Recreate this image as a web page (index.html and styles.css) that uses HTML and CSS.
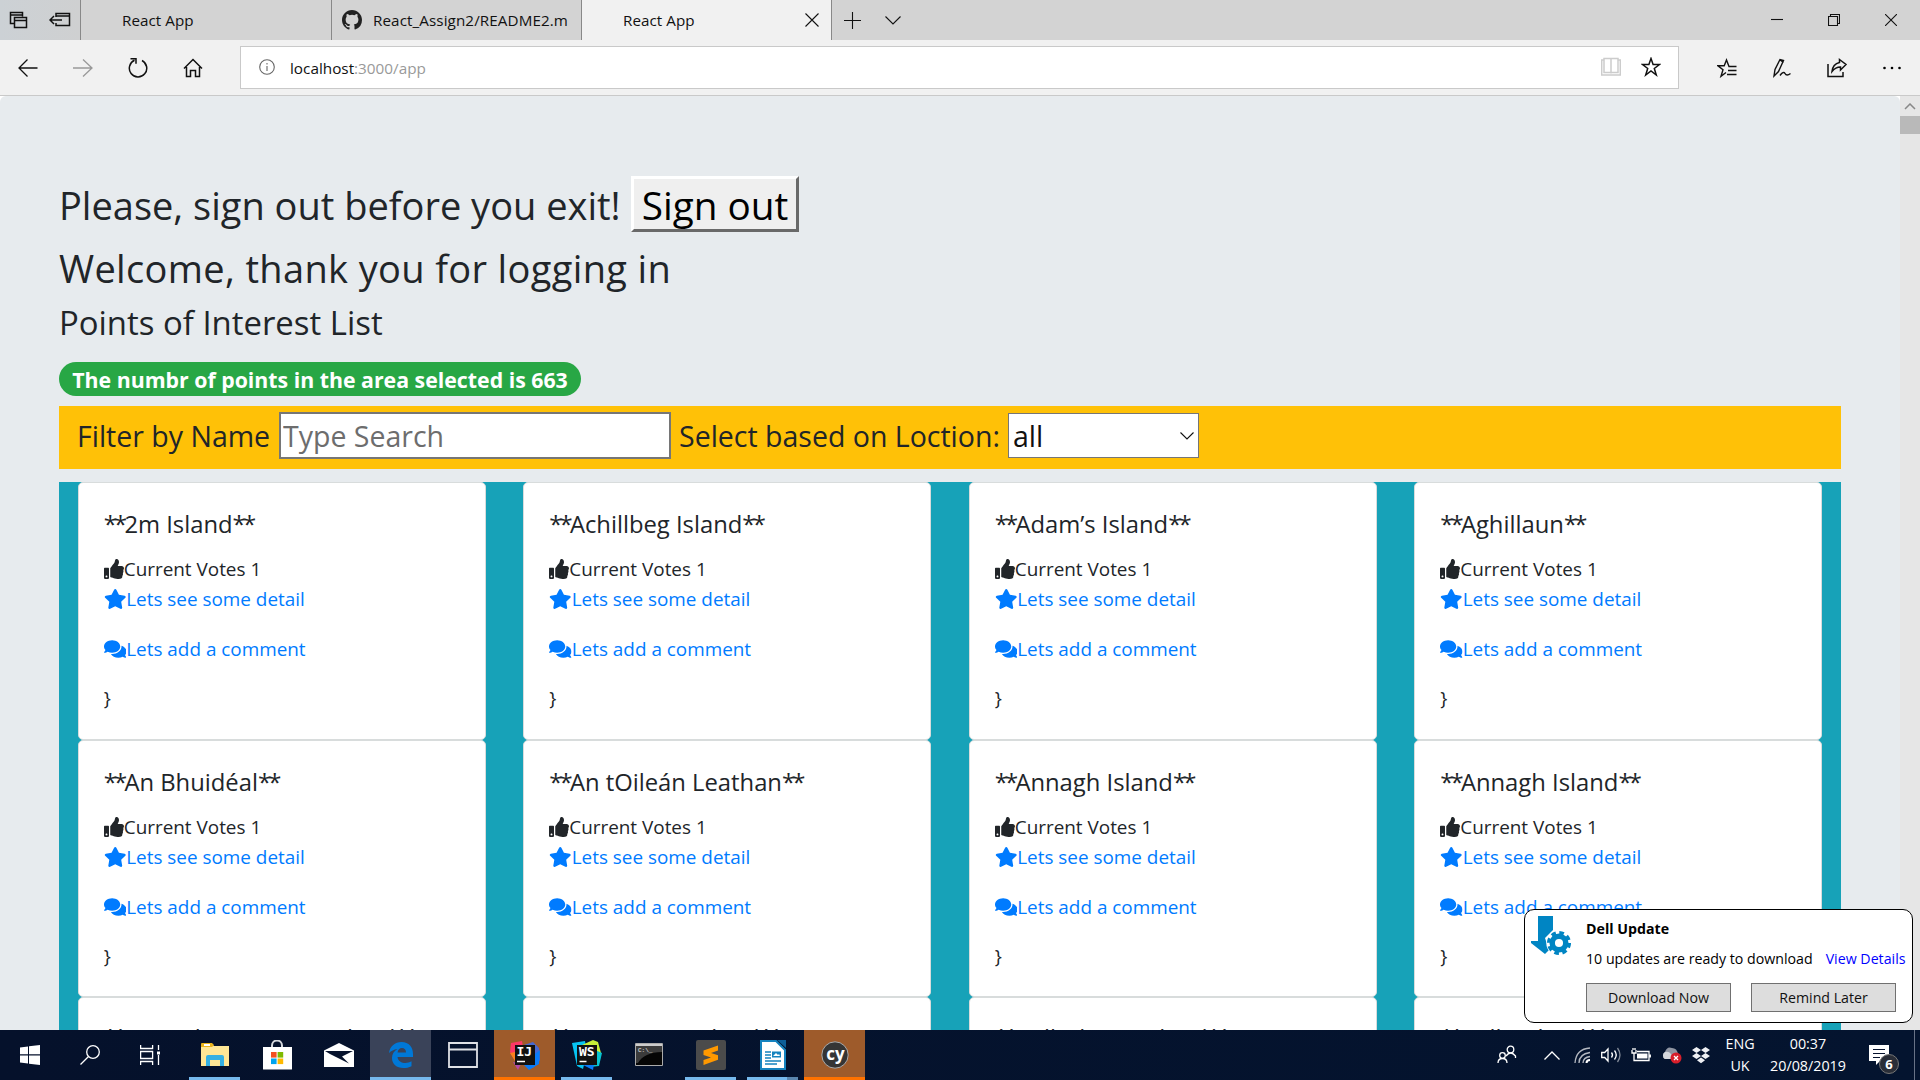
FILE: index.html
```html
<!DOCTYPE html>
<html lang="en">
<head>
<meta charset="utf-8">
<title>React App</title>
<link rel="stylesheet" href="styles.css">
</head>
<body>
<svg class="defs" aria-hidden="true">
  <symbol id="thumb" viewBox="0 0 512 512"><path d="M104 224H24c-13 0-24 11-24 24v240c0 13 11 24 24 24h80c13 0 24-11 24-24V248c0-13-11-24-24-24zM64 472c-13 0-24-11-24-24s11-24 24-24 24 11 24 24-11 24-24 24zM384 81.500c0 42.400-26 66.200-33.300 94.500h101.700c33.400 0 59.400 27.700 59.600 58.100.1 17.900-7.500 37.200-19.400 49.200l-.1.100c9.800 23.300 8.200 56-9.300 79.500 8.700 25.900-.1 57.700-16.400 74.800 4.300 17.600 2.200 32.600-6.100 44.600C440.200 511.600 389.600 512 346.800 512H344c-48.300 0-87.800-17.600-119.600-31.700-16-7.100-36.800-15.900-52.700-16.200-6.500-.1-11.800-5.500-11.800-12V238.300c0-3.200 1.300-6.300 3.600-8.500 39.600-39.100 56.600-80.600 89.100-113.100 14.800-14.800 20.200-37.200 25.400-58.900C282.500 39.300 291.800 0 312 0c24 0 72 8 72 81.500z"/></symbol>
  <symbol id="star" viewBox="0 0 576 512"><path d="M259.300 17.800L194 150.200 47.900 171.500c-26.200 3.800-36.700 36.100-17.700 54.600l105.700 103-25 145.500c-4.500 26.300 23.200 46 46.400 33.700L288 439.600l130.700 68.700c23.200 12.200 50.900-7.400 46.400-33.700l-25-145.500 105.700-103c19-18.500 8.500-50.800-17.700-54.600L382 150.200 316.700 17.800c-11.700-23.600-45.600-23.900-57.400 0z"/></symbol>
  <symbol id="comments" viewBox="0 0 576 512"><path d="M416 192c0-88.400-93.100-160-208-160S0 103.600 0 192c0 34.300 14.100 65.900 38 92-13.400 30.200-35.500 54.200-35.800 54.500-2.200 2.300-2.800 5.700-1.500 8.700S4.800 352 8 352c36.600 0 66.900-12.300 88.700-25 32.200 15.700 70.300 25 111.300 25 114.900 0 208-71.600 208-160zm122 220c23.900-26 38-57.700 38-92 0-66.900-53.500-124.200-129.300-148.100.9 6.600 1.300 13.300 1.300 20.100 0 105.900-107.700 192-240 192-10.800 0-21.300-.8-31.700-1.900C207.800 439.600 281.800 480 368 480c41 0 79.100-9.200 111.300-25 21.800 12.700 52.100 25 88.700 25 3.200 0 6.100-1.900 7.300-4.800 1.300-2.900.7-6.300-1.500-8.700-.3-.3-22.400-24.200-35.800-54.500z"/></symbol>
</svg>

<header class="tabbar">
  <div class="tab-tools">
    <svg width="20" height="20" viewBox="0 0 20 20" class="line"><path d="M5.500 13.500h-4v-11h12v4M1.500 5h12M5.500 7.500h12v10h-12zM5.500 10.500h12" stroke-width="1.500"/></svg>
    <svg width="22" height="20" viewBox="0 0 22 20" class="line"><path d="M7 7V3.500h13.500v12H7V13M7 6h13M1 10h12M5 6l-4 4 4 4" stroke-width="1.500"/></svg>
  </div>
  <div class="tab"><span>React App</span></div>
  <div class="tab github">
    <svg width="20" height="20" viewBox="0 0 16 16" fill="#222"><path d="M8 0C3.580 0 0 3.580 0 8c0 3.540 2.290 6.530 5.470 7.590.4.070.55-.17.55-.38 0-.19-.01-.82-.01-1.490-2.010.37-2.530-.49-2.690-.94-.09-.23-.48-.94-.82-1.130-.28-.15-.68-.52-.01-.53.63-.01 1.080.58 1.230.82.72 1.210 1.870.87 2.330.66.070-.52.28-.87.51-1.070-1.780-.2-3.640-.89-3.640-3.950 0-.87.31-1.590.82-2.150-.08-.2-.36-1.020.08-2.120 0 0 .67-.21 2.200.82a7.600 7.600 0 014 0c1.530-1.040 2.200-.82 2.200-.82.44 1.100.16 1.920.08 2.120.51.56.82 1.270.82 2.150 0 3.070-1.870 3.750-3.650 3.950.29.25.54.73.54 1.480 0 1.070-.01 1.930-.01 2.200 0 .21.15.46.55.38A8 8 0 0016 8c0-4.420-3.580-8-8-8z"/></svg>
    <span>React_Assign2/README2.m</span>
  </div>
  <div class="tab active"><span>React App</span>
    <svg width="14" height="14" viewBox="0 0 14 14" class="line"><path d="M.5.500l13 13M13.500.500l-13 13"/></svg>
  </div>
  <svg class="line plus" width="17" height="17" viewBox="0 0 17 17"><path d="M8.500 0v17M0 8.500h17"/></svg>
  <svg class="line down" width="16" height="9" viewBox="0 0 16 9"><path d="M.5.500L8 8l7.500-7.500"/></svg>
  <div class="window-buttons">
    <svg width="12" height="12" viewBox="0 0 12 12" class="line"><path d="M0 5.500h12"/></svg>
    <svg width="12" height="12" viewBox="0 0 12 12" class="line"><path d="M.5 2.500h9v9h-9zM2.500 2.500v-2h9v9h-2"/></svg>
    <svg width="12" height="12" viewBox="0 0 12 12" class="line"><path d="M0 0l12 12M12 0L0 12"/></svg>
  </div>
</header>

<nav class="toolbar">
  <div class="nav-icons">
    <svg width="20" height="18" viewBox="0 0 20 18" class="line"><path d="M19.500 9H1M9.500.500L1 9l8.500 8.500" stroke-width="1.300"/></svg>
    <svg width="20" height="18" viewBox="0 0 20 18" class="line pale"><path d="M0 9h19M10 .500L19 9l-9 8.500" stroke-width="1.300"/></svg>
    <svg width="20" height="22" viewBox="0 0 20 22" class="line"><path d="M14 3.500A8.700 8.700 0 1 1 6.500 3.300M2.500 1.700h5.500v5" stroke-width="1.500"/></svg>
    <svg width="20" height="20" viewBox="0 0 20 20" class="line"><path d="M1 10.500L10 1.500l9 9M3.500 9v9.500h4v-6h5v6h4V9" stroke-width="1.500"/></svg>
  </div>
  <div class="address">
    <svg width="16" height="16" viewBox="0 0 16 16" class="line grey"><circle cx="8" cy="8" r="7.300"/><path d="M8 7v5M8 4v1.500"/></svg>
    <span class="url">localhost<i>:3000/app</i></span>
    <svg class="book line" width="20" height="20" viewBox="0 0 20 20"><path d="M3 1.500h14v14H3zM10 1.500v15M3 3H.700v15H19.300V3H17" stroke-width="1.500"/></svg>
    <svg width="20" height="20" viewBox="0 0 20 20" class="line"><path d="M10 1.500l2.100 6h6.400l-5.200 4 2 6.500-5.300-4-5.300 4 2-6.500-5.200-4h6.400z" stroke-width="1.500"/></svg>
  </div>
  <div class="actions">
    <svg width="20" height="20" viewBox="0 0 20 20" class="line"><path d="M19.500 8.500H12L9.500 2 7.200 7.800H1l5 4-2 6.500 5-3.800M11 12.500h8.500M10 16.500h9.500" stroke-width="1.400"/></svg>
    <svg width="20" height="20" viewBox="0 0 20 20" class="line"><path d="M2 18l1-6.500L8 1.500l3.500 1L6.500 13.500zM7.500 1.500l4 3M8 17.500c2-3 4-4 5-2s3 2 5.500 0" stroke-width="1.400"/></svg>
    <svg width="20" height="20" viewBox="0 0 20 20" class="line"><path d="M1 6v12.500h15V14M12.500 1.500l6.500 5-5.500 5.500V9C9 9 7 11 5 13.500 5.500 9 8 5.500 12.500 4.500z" stroke-width="1.500"/></svg>
    <svg width="20" height="20" viewBox="0 0 20 20"><circle cx="2.500" cy="10" r="1.300"/><circle cx="10" cy="10" r="1.300"/><circle cx="17.500" cy="10" r="1.300"/></svg>
  </div>
</nav>

<div class="viewport">
  <main class="page">
    <h2 class="signout"><span>Please, sign out before you exit!</span><button>Sign out</button></h2>
    <h2 class="welcome">Welcome, thank you for logging in</h2>
    <h3 class="list-title">Points of Interest List</h3>
    <div class="badge">The numbr of points in the area selected is 663</div>
    <div class="filter">
      <label class="by-name">Filter by Name</label>
      <input type="text" placeholder="Type Search">
      <label class="by-place">Select based on Loction:</label>
      <div class="select">all<svg width="14" height="8" viewBox="0 0 14 8" class="line"><path d="M.5.500L7 7l6.500-6.500"/></svg></div>
    </div>
    <div class="cards">
      <article class="card"><h5><i>**</i>2m Island<i>**</i></h5><p class="votes"><svg><use href="#thumb"/></svg>Current Votes 1</p><a class="detail"><svg><use href="#star"/></svg>Lets see some detail</a><a class="comment"><svg><use href="#comments"/></svg>Lets add a comment</a><p>}</p></article>
      <article class="card"><h5><i>**</i>Achillbeg Island<i>**</i></h5><p class="votes"><svg><use href="#thumb"/></svg>Current Votes 1</p><a class="detail"><svg><use href="#star"/></svg>Lets see some detail</a><a class="comment"><svg><use href="#comments"/></svg>Lets add a comment</a><p>}</p></article>
      <article class="card"><h5><i>**</i>Adam’s Island<i>**</i></h5><p class="votes"><svg><use href="#thumb"/></svg>Current Votes 1</p><a class="detail"><svg><use href="#star"/></svg>Lets see some detail</a><a class="comment"><svg><use href="#comments"/></svg>Lets add a comment</a><p>}</p></article>
      <article class="card"><h5><i>**</i>Aghillaun<i>**</i></h5><p class="votes"><svg><use href="#thumb"/></svg>Current Votes 1</p><a class="detail"><svg><use href="#star"/></svg>Lets see some detail</a><a class="comment"><svg><use href="#comments"/></svg>Lets add a comment</a><p>}</p></article>
      <article class="card"><h5><i>**</i>An Bhuidéal<i>**</i></h5><p class="votes"><svg><use href="#thumb"/></svg>Current Votes 1</p><a class="detail"><svg><use href="#star"/></svg>Lets see some detail</a><a class="comment"><svg><use href="#comments"/></svg>Lets add a comment</a><p>}</p></article>
      <article class="card"><h5><i>**</i>An tOileán Leathan<i>**</i></h5><p class="votes"><svg><use href="#thumb"/></svg>Current Votes 1</p><a class="detail"><svg><use href="#star"/></svg>Lets see some detail</a><a class="comment"><svg><use href="#comments"/></svg>Lets add a comment</a><p>}</p></article>
      <article class="card"><h5><i>**</i>Annagh Island<i>**</i></h5><p class="votes"><svg><use href="#thumb"/></svg>Current Votes 1</p><a class="detail"><svg><use href="#star"/></svg>Lets see some detail</a><a class="comment"><svg><use href="#comments"/></svg>Lets add a comment</a><p>}</p></article>
      <article class="card"><h5><i>**</i>Annagh Island<i>**</i></h5><p class="votes"><svg><use href="#thumb"/></svg>Current Votes 1</p><a class="detail"><svg><use href="#star"/></svg>Lets see some detail</a><a class="comment"><svg><use href="#comments"/></svg>Lets add a comment</a><p>}</p></article>
      <article class="card last"><h5><i>**</i>Annagh a Morann Island<i>**</i></h5></article>
      <article class="card last"><h5><i>**</i>Avaragane Island<i>**</i></h5></article>
      <article class="card last"><h5><i>**</i>Ballyshane Island<i>**</i></h5></article>
      <article class="card last"><h5><i>**</i>Bally Island<i>**</i></h5></article>
    </div>
  </main>
  <div class="scrollbar">
    <svg width="12" height="7" viewBox="0 0 12 7" class="line"><path d="M1 6l5-5 5 5"/></svg>
    <div class="thumb"></div>
  </div>
</div>

<footer class="taskbar">
  <div class="launch">
    <div class="slot small"><svg width="20" height="20" viewBox="0 0 20 20" fill="#fff"><path d="M0 2.500L8 1.400V9.300H0zM9 1.200L20 0v9.300H9zM0 10.500h8v8L0 17.500zM9 10.500h11V20L9 18.700z"/></svg></div>
    <div class="slot small"><svg width="20" height="20" viewBox="0 0 20 20" class="white"><circle cx="13" cy="7" r="6.300"/><path d="M8.500 11.500L.500 19.500"/></svg></div>
    <div class="slot small"><svg width="20" height="20" viewBox="0 0 20 20" class="white"><path d="M.6 0v3.500h12V0M.6 6.500h12v7H.6zM.6 20v-3.500h12V20M18.500 0v5M18.500 10v10"/><path d="M17 6.500h3v3h-3z" fill="#fff" stroke="none"/></svg></div>
    <div class="slot run gap"><svg width="28" height="26" viewBox="0 0 28 26"><path d="M0 2h11l2 2h15v20H0z" fill="#ffe796"/><path d="M0 1.500Q0 1 1 1h10l2 2-2 2H0z" fill="#eab41d"/><path d="M3 2h6v2H3z" fill="#fff"/><path d="M5 24V15q0-2 2-2h14q2 0 2 2v9h-4v-6H9v6z" fill="#35b0e3"/></svg></div>
    <div class="slot"><svg width="30" height="30" viewBox="0 0 30 30"><path d="M10 8V5.500a5 5 0 0 1 10 0V8" fill="none" stroke="#d5d8dd" stroke-width="2"/><path d="M1 7h29v22q0 .500-.500.500h-28q-.500 0-.500-.500z" fill="#fff"/><path d="M9 12h5.600v5.600H9z" fill="#f25022"/><path d="M15.600 12h5.600v5.600h-5.600z" fill="#7fba00"/><path d="M9 18.500h5.600v5.600H9z" fill="#00a4ef"/><path d="M15.600 18.500h5.600v5.600h-5.600z" fill="#ffb900"/></svg></div>
    <div class="slot"><svg width="30" height="24" viewBox="0 0 30 24"><path d="M0 7.500L15 0l15 7.500V24H0z" fill="#fff"/><path d="M1 8h28L18 13.500l7 7L6 11z" fill="#06122d"/></svg></div>
    <div class="slot current"><svg width="26" height="28" viewBox="0 0 26 28"><path d="M1 12C2 5 7 1 13.500 1 21 1 25 6 25 13v3H9.500c.5 4 4 6 8 6 2 0 4-.7 6-1.700v5C21 26.700 18 27 15.500 27 8.500 27 4 23 4 17c0-4 2-7 5.500-9C6 8.500 3 10 1 12zm8.500-.500h8.500c0-3-1.500-4.500-4-4.500-2.500 0-4 1.700-4.500 4.500z" fill="#0078d7"/></svg></div>
    <div class="slot"><svg width="30" height="26" viewBox="0 0 30 26" fill="none" stroke="#dfe1e6" stroke-width="1.800"><path d="M1 1h28v24H1zM1 7.500h28"/></svg></div>
    <div class="slot alert"><svg width="30" height="30" viewBox="0 0 30 30"><path d="M1 3l11-2 2 12-7 11L0 12z" fill="#fc3766"/><path d="M0 13l5-1v9z" fill="#fc801d"/><path d="M14 5l9-3 6 6 1 12-7 8-10-6z" fill="#4768d2"/><path d="M20 18l10-8-1 14-10 6-6-6z" fill="#087cfa"/><path d="M3 22l8 2-3 6z" fill="#b34aa8"/><path d="M5 5h20v20H5z" fill="#111"/><path d="M7 21.500h8" stroke="#fff" stroke-width="1.500"/><text x="6.500" y="16" class="mono">IJ</text></svg></div>
    <div class="slot run"><svg width="30" height="30" viewBox="0 0 30 30"><path d="M0 3l13-2 2 12-4 16-6-3z" fill="#07c3f2"/><path d="M10 5l11-5 5 2 3 11-5 3z" fill="#c9ef38"/><path d="M23 10l7 3-3 13-9 1-8-3z" fill="#07c3d0"/><path d="M9 24h13l-1 6z" fill="#087cfa"/><path d="M5 5h20v20H5z" fill="#111"/><path d="M7.500 21.500h7" stroke="#fff" stroke-width="1.500"/><text x="7" y="16" class="mono">WS</text></svg></div>
    <div class="slot"><svg width="28" height="24" viewBox="0 0 28 24"><path d="M.5.500h27v22H.500z" fill="#050505" stroke="#aaa"/><path d="M1 1h26v2H1z" fill="#ccc"/><path d="M1 3h26v6C15 9 7 13 3 20H1z" fill="#3b3b3b"/><text x="3" y="9" class="prompt">C:\_</text></svg></div>
    <div class="slot run"><svg width="30" height="30" viewBox="0 0 30 30"><rect width="30" height="30" rx="2" fill="#4b4b4b"/><path d="M7.500 10.500L22 5.500v5l-7 2.500 7 2.300v4.500L7.500 25v-5l7.500-2.600-7.500-2.500z" fill="#ff9800"/></svg></div>
    <div class="slot run multi"><svg width="26" height="30" viewBox="0 0 26 30"><path d="M1 1h15l9 9v19H1z" fill="#fff" stroke="#1583bf" stroke-width="2"/><path d="M17 0h9v8z" fill="#0d5f98"/><path d="M5 12h6M5 15h6M5 18h6M5 21h16M5 24h12" stroke="#1583bf" stroke-width="1.300"/><path d="M12 11.500h9v6h-9z" fill="#1583bf"/><path d="M13 16l3-3 2 2 1-1 1 2z" fill="#fff"/></svg></div>
    <div class="slot alert"><svg width="28" height="28" viewBox="0 0 28 28"><circle cx="14" cy="14" r="13.200" fill="#353535" stroke="#aaa"/><text x="5.300" y="18.500" class="cy">cy</text></svg></div>
  </div>
  <div class="tray">
    <svg class="people white" width="20" height="20" viewBox="0 0 20 20"><circle cx="13.500" cy="4.500" r="3.300"/><circle cx="5.500" cy="10.500" r="2.800"/><path d="M9 11q4.500-6 9.500 0v2M1 18q0-4.500 4.500-4.500T10 18"/></svg>
    <svg class="up white" width="16" height="9" viewBox="0 0 16 9"><path d="M.5 8.500L8 1l7.500 7.500"/></svg>
    <svg class="wifi white" width="17" height="17" viewBox="0 0 17 17"><path d="M1 16Q2 2 16 1M5 16Q5 7 16 5.500M9 16Q9 10.500 16 9.500" opacity=".7"/><path d="M12.500 16Q12.500 13 16 13" stroke-width="2"/></svg>
    <svg class="sound white" width="20" height="16" viewBox="0 0 20 16"><path d="M.7 5.500h3L7 2v12L3.700 10.500h-3zM10.500 5.500q2 2.500 0 5M13.500 3.500q3.500 4.500 0 9"/><path d="M16.500 1q5 7 0 14" opacity=".5"/></svg>
    <svg class="battery white" width="20" height="14" viewBox="0 0 20 14"><path d="M6 3.500h12v9H3V8M19.300 6.500v3M1 2v3h4V2M2 0v2M4 0v2M3 5v3"/><path d="M6 5.500h10.500v5H6z" fill="#fff" stroke="none"/></svg>
    <svg class="cloud" width="21" height="18" viewBox="0 0 21 18"><path d="M4 13a4 4 0 0 1 0-7Q6 0 11 2q5 0 6 6l-2 5z" fill="#8f95a2"/><path d="M4 13a4 4 0 0 1 0-7q4-1 6 2l3 5z" fill="#d5d8dd"/><circle cx="15" cy="12" r="5.500" fill="#d71f2b"/><path d="M13 10l4 4M17 10l-4 4" stroke="#fff" stroke-width="1.300"/></svg>
    <svg class="dropbox" width="18" height="17" viewBox="0 0 18 17" fill="#eef0f4"><path d="M4.500 0L9 3 4.500 6 0 3zM13.500 0L18 3l-4.500 3L9 3zM4.500 6L9 9l-4.500 3L0 9zM13.500 6L18 9l-4.500 3L9 9zM9 10.500l4 2.800-4 2.900-4-2.900z"/></svg>
    <div class="lang">ENG<br>UK</div>
    <div class="clock">00:37<br>20/08/2019</div>
    <div class="notes"><svg width="20" height="20" viewBox="0 0 20 20"><path d="M0 0h20v16H11l-4 4v-4H0z" fill="#fff"/><path d="M4 4.500h12M4 8.500h12M4 12.500h7" stroke="#06122d"/></svg><b>6</b></div>
  </div>
</footer>

<aside class="toast">
  <svg class="dell" width="40" height="40" viewBox="0 0 40 40"><path d="M7 0h15v14L14 22l4 12-4 4L0 27v-2h7z" fill="#0085c3"/><circle cx="28" cy="27" r="12.700" fill="#fff"/><circle cx="28" cy="27" r="6.800" fill="none" stroke="#0085c3" stroke-width="5.500"/><circle cx="28" cy="27" r="10.300" fill="none" stroke="#0085c3" stroke-width="3.500" stroke-dasharray="4.600 3.490"/></svg>
  <div class="toast-body">
    <strong>Dell Update</strong>
    <p><span>10 updates are ready to download</span><a>View Details</a></p>
    <div class="toast-buttons"><button>Download Now</button><button>Remind Later</button></div>
  </div>
</aside>
</body>
</html>
```
FILE: styles.css
```css
* { box-sizing: border-box; }
body { margin: 0; width: 1920px; height: 1080px; overflow: hidden; display: flex; flex-direction: column; font-family: "Open Sans", "Noto Sans", sans-serif; color: #212529; background: #e7ebee; }
h2, h3, h5, p { margin: 0; font-weight: 400; }
svg { display: block; flex: none; }
.defs { position: absolute; width: 0; height: 0; }
.line { fill: none; stroke: #111; stroke-width: 1.1; }
.white { fill: none; stroke: #fff; stroke-width: 1.3; }
.pale { stroke: #999; }
.grey { stroke: #666; }

.tabbar { height: 40px; flex: none; display: flex; align-items: center; background: #d3d3d3; font-size: 15.2px; color: #111; }
.tab-tools { width: 80px; height: 40px; display: flex; align-items: center; gap: 20px; padding-left: 9px; background: linear-gradient(90deg, #ccd1d5, #cfd0d1); }
.tab { width: 251px; height: 40px; display: flex; align-items: center; border-left: 1px solid #888; padding-left: 41px; white-space: nowrap; letter-spacing: .05px; }
.tab.github { width: 250px; padding-left: 10px; gap: 11px; letter-spacing: .1px; }
.tab.active { background: #f1f1f1; border-right: 1px solid #888; }
.tab.active svg { margin-left: auto; margin-right: 12px; }
.plus { margin-left: 12px; }
.down { margin-left: 24px; }
.window-buttons { margin-left: auto; margin-right: 23px; display: flex; gap: 45px; }

.toolbar { height: 56px; flex: none; display: flex; align-items: center; background: #f1f1f1; border-bottom: 1px solid #c9c9c9; }
.nav-icons { width: 240px; padding-left: 18px; display: flex; align-items: center; gap: 35px; }
.address { width: 1439px; height: 43px; margin-bottom: 1px; background: #fff; border: 1px solid #c9c9c9; display: flex; align-items: center; padding: 0 17px 0 18px; }
.url { flex: 1; margin-left: 15px; padding-top: 2px; font-size: 15.3px; color: #111; }
.url i { font-style: normal; color: #999; }
.book { margin-right: 20px; stroke: #ccc; }
.actions { margin-left: 38px; display: flex; gap: 35px; }

.viewport { height: 934px; flex: none; display: flex; overflow: hidden; background: #fff; }
.page { width: 1900px; padding: 80px 59px 0; background: #e7ebee; border-radius: 6px 6px 0 0; }
.scrollbar { width: 20px; display: flex; flex-direction: column; align-items: center; background: #e6e6e6; }
.scrollbar svg { margin: 7px 0 6px; stroke: #888; stroke-width: 1.5; }
.thumb { width: 20px; height: 18px; background: #b9b9b9; }
.signout { height: 56px; display: flex; align-items: center; font-size: 38px; white-space: nowrap; }
.signout span { width: 572px; padding-top: 2px; }
.signout button { width: 168px; height: 56px; padding: 1px 0 0; font: inherit; font-size: 38.7px; line-height: 48px; color: #000; background: #efefef; border: solid; border-width: 3px; border-color: #fff #696969 #696969 #fff; }
.welcome { height: 62px; line-height: 64px; margin-top: 4px; font-size: 38px; letter-spacing: .35px; white-space: nowrap; }
.list-title { height: 50px; line-height: 50px; font-size: 32.9px; white-space: nowrap; }
.badge { width: 522px; height: 34px; margin-top: 14px; border-radius: 17px; background: #28a745; color: #fff; font-size: 21.3px; font-weight: 700; line-height: 36px; text-align: center; white-space: nowrap; }
.filter { height: 63px; margin: 10px 0 13px; padding: 0 18px; display: flex; align-items: center; background: #ffc107; font-size: 28.5px; white-space: nowrap; }
.filter label { margin-bottom: 3px; }
.by-name { width: 202px; }
.filter input { width: 392px; height: 47px; padding: 0 2px; border: 2px solid #767676; font: inherit; background: #fff; margin-bottom: 4px; }
.filter input::placeholder { color: #6d6d6d; opacity: 1; }
.by-place { width: 329px; margin-left: 8px; }
.select { width: 191px; height: 45px; margin-bottom: 4px; padding: 0 4px; display: flex; align-items: center; justify-content: space-between; background: #fff; border: 1px solid #767676; color: #111; }
.cards { display: grid; grid-template-columns: repeat(4, 445.5px); grid-auto-rows: 257.6px; background: #17a2b8; }
.card { margin: 0 18.75px; padding: 24px 25px; background: #fff; border: 1px solid #d8dcdc; border-radius: 5px; font-size: 18.9px; line-height: 30px; white-space: nowrap; }
.card h5 { font-size: 23.8px; line-height: 34px; margin-bottom: 13px; }
.card h5 i { font-style: normal; letter-spacing: -2.8px; }
.card.last h5 { margin-top: -1px; }
.card .votes, .card a { display: flex; align-items: center; }
.card a { color: #007bff; }
.card .comment { margin: 20px 0 19px; }
.card .votes svg { width: 20px; height: 20px; fill: #212529; }
.card a svg { width: 22.500px; height: 20px; fill: #007bff; }

.taskbar { height: 50px; flex: none; display: flex; justify-content: space-between; background: linear-gradient(90deg, #05112b, #04142f); color: #fff; }
.launch { display: flex; gap: 1px; }
.slot { width: 61px; height: 50px; display: flex; align-items: center; justify-content: center; }
.slot.small { width: 59px; }
.slot.gap { margin-left: 4px; }
.slot.run { background: linear-gradient(#76b9ed, #76b9ed) 5px 47px / 51px 3px no-repeat; }
.slot.multi { background: linear-gradient(90deg, #76b9ed 40px, #5a86ae 40px) 5px 47px / 51px 3px no-repeat; }
.slot.current { background: #3a4359; border-bottom: 3px solid #76b9ed; padding-top: 3px; }
.slot.alert { background: #9e5b2b; border-bottom: 3px solid #ff7200; padding-top: 3px; }
.mono { font: 700 13px "DejaVu Sans Mono", monospace; fill: #fff; }
.prompt { font: 6px "Liberation Mono", monospace; fill: #eee; }
.cy { font: 700 17px "Open Sans", sans-serif; fill: #fff; }
.tray { display: flex; align-items: center; font-size: 14.300px; line-height: 22px; text-align: center; white-space: nowrap; }
.people { margin-right: 27px; }
.up { margin-right: 14px; }
.wifi { margin-right: 10px; }
.sound { margin-right: 10px; }
.battery { margin-right: 10px; }
.cloud { margin-right: 10px; }
.lang { width: 58px; padding-left: 2px; }
.clock { width: 82px; margin-left: -1px; }
.notes { position: relative; width: 66px; height: 50px; margin-right: 5px; padding: 15px 0 0 20px; border-right: 1px solid #687286; }
.notes b { position: absolute; left: 30px; top: 24px; width: 20px; height: 20px; border: 1px solid #777; border-radius: 50%; background: #2a2e38; font-size: 13px; line-height: 18px; }

.toast { position: absolute; left: 1524px; top: 909px; width: 389px; height: 114px; display: flex; padding: 6px 0 0 6px; border: 1.5px solid #000; border-radius: 10px; background: #fff; color: #000; font-size: 14.200px; white-space: nowrap; }
.toast-body { margin-left: 15px; flex: 1; }
.toast strong { display: block; line-height: 26px; }
.toast p { line-height: 34px; display: flex; gap: 13px; }
.toast a { color: #00f; }
.toast-buttons { display: flex; gap: 20px; margin-top: 7px; }
.toast button { width: 145px; height: 29px; padding: 0; border: 1px solid #707070; background: #ddd; font: inherit; color: #111; }
```
